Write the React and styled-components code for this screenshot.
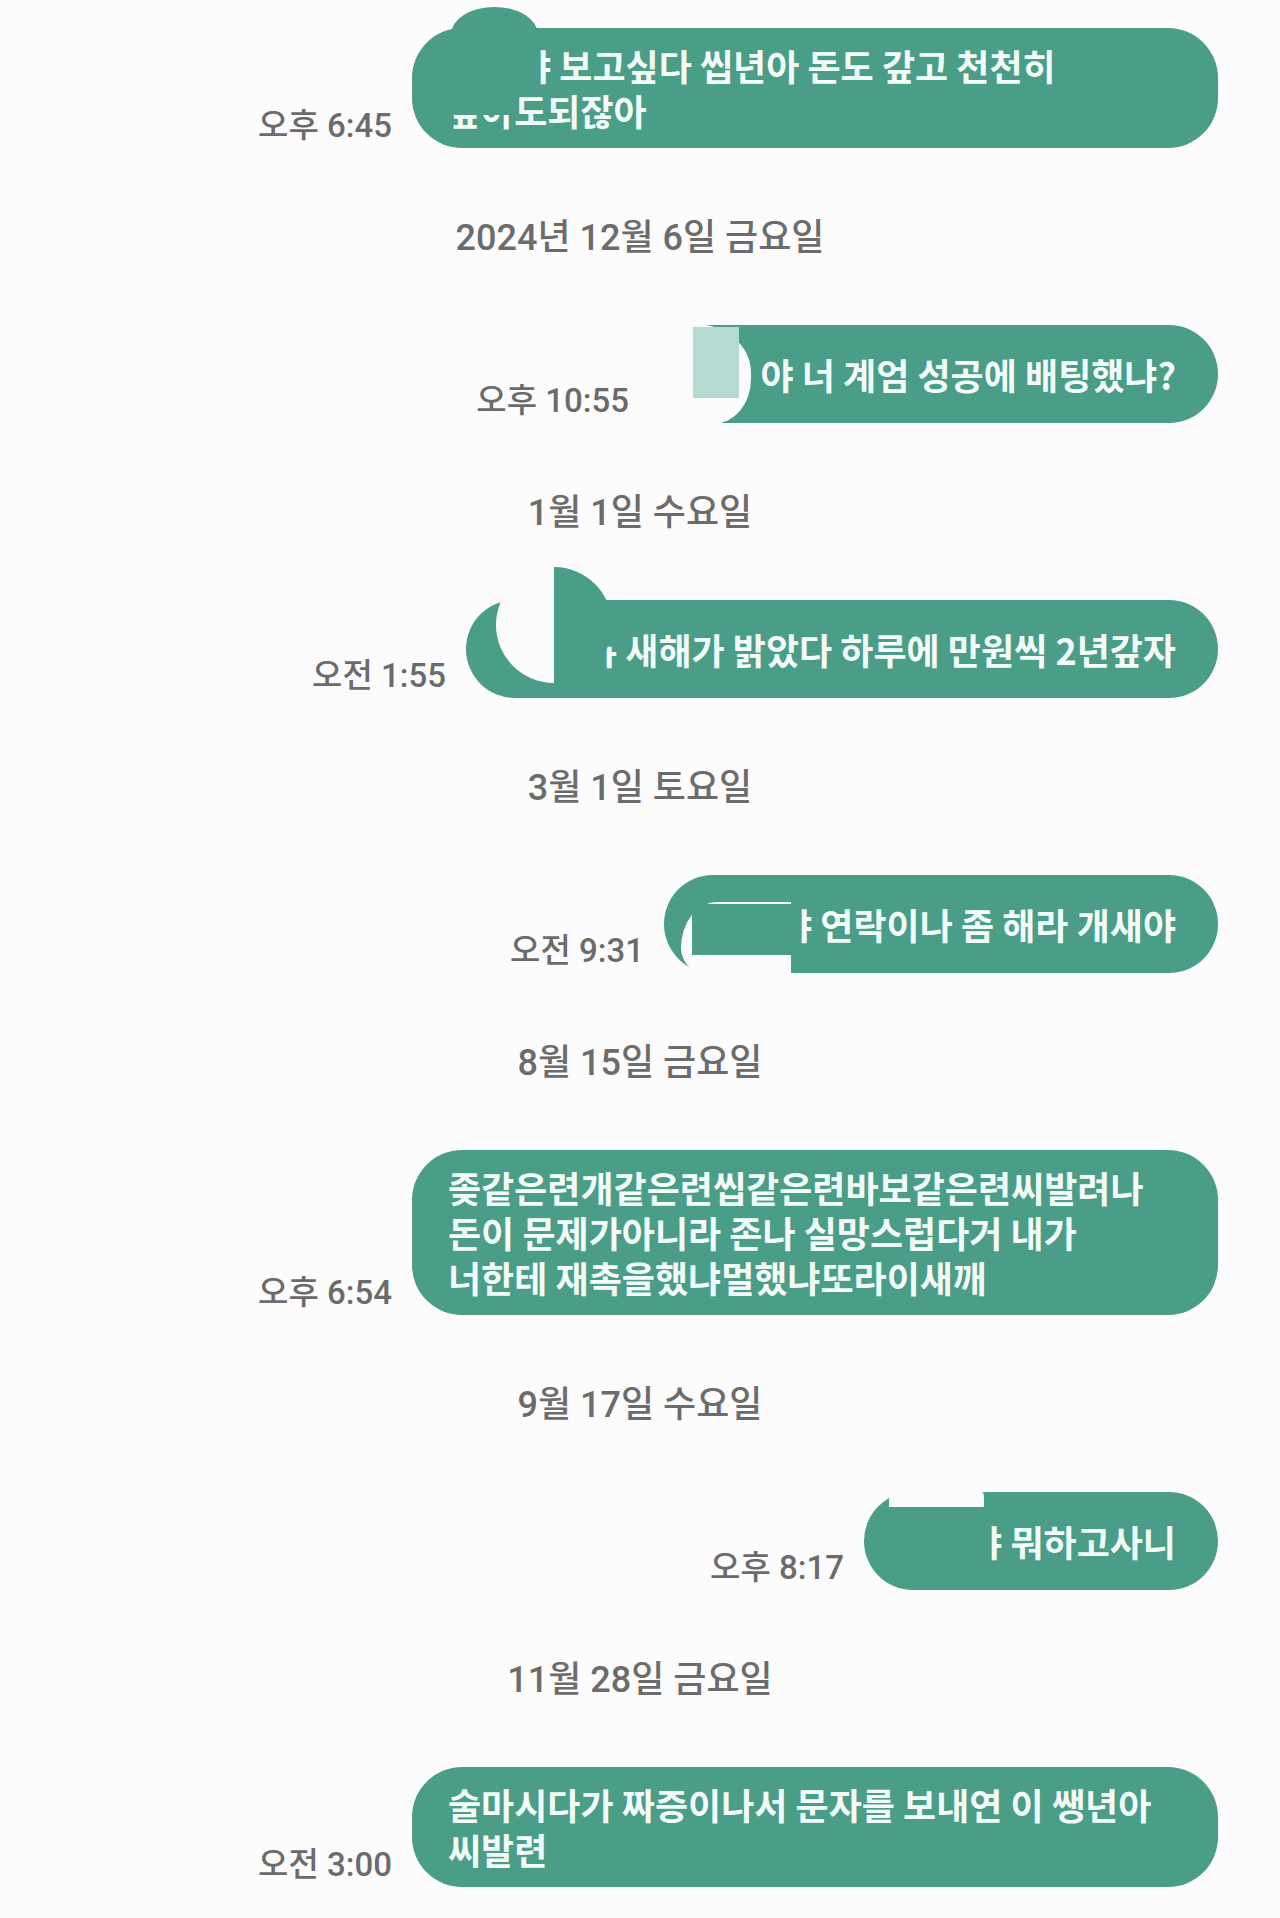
import React from 'react';
import styled, { createGlobalStyle } from 'styled-components';

const GREEN = '#4a9d86';

const GlobalStyle = createGlobalStyle`
  body {
    margin: 0;
    background: #fcfcfc;
  }
`;

const Page = styled.div`
  display: flex;
  flex-direction: column;
  padding: 28px 62px 0 0;
  min-height: 1918px;
  box-sizing: border-box;
`;

const Row = styled.div`
  display: flex;
  justify-content: flex-end;
  align-items: flex-end;
  gap: 20px;
`;

const Time = styled.span`
  font-family: Roboto, "Noto Sans CJK KR", sans-serif;
  font-size: 33px;
  font-weight: 500;
  line-height: 36px;
  color: #6b6b6b;
  margin-bottom: 4px;
  white-space: nowrap;
`;

const DateLine = styled.div`
  text-align: center;
  padding: 67px 0 64px 62px;
  font-family: Roboto, "Noto Sans CJK KR", sans-serif;
  font-size: 36px;
  font-weight: 500;
  line-height: 46px;
  color: #6c6c6c;
`;

const Bubble = styled.div`
  position: relative;
  box-sizing: border-box;
  width: ${(p) => p.$w}px;
  min-height: 98px;
  padding: 15px 42px 15px 36px;
  border-radius: 50px;
  background: ${GREEN};
  color: #f3fbf8;
  display: flex;
  flex-direction: column;
  justify-content: center;
  align-items: ${(p) => (p.$single ? 'flex-end' : 'flex-start')};
  font-family: "Noto Sans CJK KR", sans-serif;
  font-weight: 600;
  font-size: 36px;
  line-height: 45px;
  white-space: nowrap;
`;

const Line = styled.div``;

// 이름 가린 자리
const Gap = styled.span`
  display: inline-block;
  width: ${(p) => p.$w}px;
`;

// 반쯤 지워진 글자
const Cut = styled.span`
  display: inline-block;
  clip-path: inset(${(p) => p.$top || 0}% 0 0 ${(p) => p.$from || 0}%);
`;

// 캡처 위에 칠한 자국
const Patch = styled.div`
  position: absolute;
  left: ${(p) => p.$l}px;
  top: ${(p) => p.$t}px;
  width: ${(p) => p.$w}px;
  height: ${(p) => p.$h}px;
  border-radius: ${(p) => p.$r || '0'};
`;

const WhitePatch = styled(Patch)`
  background: #fcfcfc;
`;

const GreenPatch = styled(Patch)`
  background: ${GREEN};
`;

const FadedPatch = styled(Patch)`
  background: #b4dad2;
`;

export default function App() {
  return (
    <>
      <GlobalStyle />
      <Page>
        <Row>
          <Time>오후 6:45</Time>
          <Bubble $w={806}>
            <Line>
              <Gap $w={70} />
              <Cut $from={62}>야</Cut> 보고싶다 씹년아 돈도 갚고 천천히
            </Line>
            <Line>
              <Cut $top={60}>갚아</Cut>도되잖아
            </Line>
            <GreenPatch $l={39} $t={-21} $w={87} $h={44} $r="44px 44px 0 0 / 28px 28px 0 0" />
          </Bubble>
        </Row>

        <DateLine>2024년 12월 6일 금요일</DateLine>

        <Row>
          <Time>오후 10:55</Time>
          <Bubble $w={569} $single>
            <Line>야 너 계엄 성공에 배팅했냐?</Line>
            <WhitePatch $l={-1} $t={-1} $w={103} $h={100} $r="50px 60px 40px 50px / 50px 52px 48px 50px" />
            <FadedPatch $l={44} $t={2} $w={46} $h={71} />
          </Bubble>
        </Row>

        <DateLine>1월 1일 수요일</DateLine>

        <Row>
          <Time>오전 1:55</Time>
          <Bubble $w={752} $single>
            <Line>
              <Cut $from={60} $top={45}>야</Cut> 새해가 밝았다 하루에 만원씩 2년갚자
            </Line>
            <WhitePatch $l={30} $t={-33} $w={58} $h={116} $r="58px 0 0 58px" />
            <GreenPatch $l={88} $t={-33} $w={58} $h={116} $r="0 58px 58px 0" />
          </Bubble>
        </Row>

        <DateLine>3월 1일 토요일</DateLine>

        <Row>
          <Time>오전 9:31</Time>
          <Bubble $w={554} $single>
            <Line>
              <Cut $from={62}>야</Cut> 연락이나 좀 해라 개새야
            </Line>
            <WhitePatch $l={17} $t={27} $w={110} $h={73} $r="40px 0 0 30px / 50px 0 0 30px" />
            <GreenPatch $l={28} $t={29} $w={99} $h={51} />
          </Bubble>
        </Row>

        <DateLine>8월 15일 금요일</DateLine>

        <Row>
          <Time>오후 6:54</Time>
          <Bubble $w={806}>
            <Line>좆같은련개같은련씹같은련바보같은련씨발려나</Line>
            <Line>돈이 문제가아니라 존나 실망스럽다거 내가</Line>
            <Line>너한테 재촉을했냐멀했냐또라이새깨</Line>
          </Bubble>
        </Row>

        <DateLine>9월 17일 수요일</DateLine>

        <Row>
          <Time>오후 8:17</Time>
          <Bubble $w={354} $single>
            <Line>
              <Cut $from={62}>야</Cut> 뭐하고사니
            </Line>
            <WhitePatch $l={25} $t={-2} $w={95} $h={17} $r="10px 6px 0 0" />
          </Bubble>
        </Row>

        <DateLine>11월 28일 금요일</DateLine>

        <Row>
          <Time>오전 3:00</Time>
          <Bubble $w={806}>
            <Line>술마시다가 짜증이나서 문자를 보내연 이 쌩년아</Line>
            <Line>씨발련</Line>
          </Bubble>
        </Row>
      </Page>
    </>
  );
}
